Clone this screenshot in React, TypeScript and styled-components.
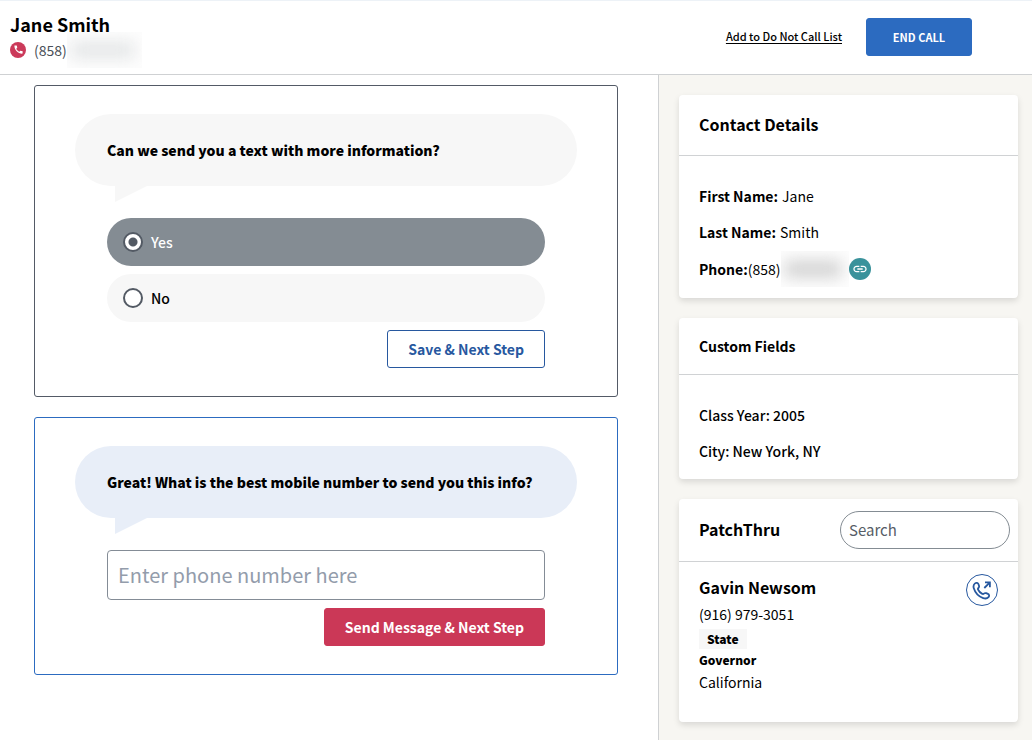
import React, { useState } from "react";
import styled, { createGlobalStyle } from "styled-components";
import { MdCall, MdLink } from "react-icons/md";

const GlobalStyle = createGlobalStyle`
  *, *::before, *::after { box-sizing: border-box; }
  body {
    margin: 0;
    background: #fff;
    color: #000;
    font-family: "Noto Sans CJK JP", "Noto Sans", sans-serif;
    font-size: 14px;
    line-height: 24px;
  }
  h1, h2, h3, p { margin: 0; font-size: inherit; }
  button, input { font: inherit; color: inherit; margin: 0; }
  button { cursor: pointer; }
`;

const Page = styled.div`
  display: flex;
  flex-direction: column;
  min-height: 100vh;
`;

const Header = styled.header`
  display: flex;
  align-items: center;
  justify-content: space-between;
  height: 75px;
  padding: 0 60px 2px 10px;
  border-top: 1px solid #edf2f7;
  border-bottom: 1px solid #cfd1d3;
`;

const Caller = styled.div`
  padding-bottom: 2px;
`;

const CallerName = styled.h1`
  font-size: 18px;
  font-weight: 700;
  line-height: 28px;
`;

const CallerPhone = styled.p`
  display: flex;
  align-items: center;
  color: #4a5058;
`;

const PhoneBadge = styled.span`
  display: grid;
  place-items: center;
  width: 16px;
  height: 16px;
  margin-right: 8px;
  border-radius: 50%;
  background: #cb3a5a;
  color: #fff;
`;

const Redacted = styled.span<{ $width: number; $tone: string }>`
  display: flex;
  align-items: center;
  width: ${(p) => p.$width}px;
  height: 36px;
  margin: -6px 0;
  overflow: hidden;
  background: #fdfdfd;

  &::before {
    content: "";
    width: 100%;
    height: 16px;
    margin: 0 8px 0 4px;
    background: ${(p) => p.$tone};
    filter: blur(8px);
  }
`;

const HeaderActions = styled.div`
  display: flex;
  align-items: center;
  gap: 24px;
`;

const TextLink = styled.a`
  padding-bottom: 2px;
  color: #000;
  font-size: 11px;
  font-weight: 500;
  text-decoration: underline;
  text-underline-offset: 2px;
`;

const Button = styled.button<{ $kind: "primary" | "outline" | "danger" }>`
  height: 38px;
  padding: 0 20px;
  border: 1px solid
    ${(p) => ({ primary: "#2c6bc0", outline: "#27589f", danger: "#cb3857" })[p.$kind]};
  border-radius: 3px;
  background: ${(p) => ({ primary: "#2c6bc0", outline: "#fff", danger: "#cb3857" })[p.$kind]};
  color: ${(p) => (p.$kind === "outline" ? "#27589f" : "#fff")};
  font-weight: 700;
  line-height: 20px;
`;

const EndCallButton = styled(Button)`
  min-width: 106px;
  font-size: 11px;
`;

const Body = styled.div`
  display: flex;
  flex: 1;
`;

const Script = styled.main`
  display: flex;
  flex: 1;
  flex-direction: column;
  gap: 20px;
  min-width: 0;
  padding: 10px 40px 20px 34px;
`;

const Step = styled.form<{ $active?: boolean }>`
  padding: 28px 40px;
  border: 1px solid ${(p) => (p.$active ? "#2c6bc0" : "#535a66")};
  border-radius: 3px;
`;

const Bubble = styled.h2<{ $color: string }>`
  position: relative;
  padding: 24px 32px;
  border-radius: 36px;
  background: ${(p) => p.$color};
  font-weight: 900;

  &::after {
    content: "";
    position: absolute;
    top: 100%;
    left: 40px;
    width: 32px;
    height: 16px;
    background: ${(p) => p.$color};
    clip-path: polygon(0 0, 100% 0, 0 100%);
  }
`;

const Answers = styled.div`
  display: flex;
  flex-direction: column;
  gap: 8px;
  padding: 32px 32px 0;
`;

const Option = styled.label<{ $selected: boolean }>`
  display: flex;
  align-items: center;
  gap: 8px;
  height: 48px;
  padding: 0 16px;
  border-radius: 24px;
  background: ${(p) => (p.$selected ? "#848c93" : "#f7f7f7")};
  color: ${(p) => (p.$selected ? "#fff" : "#000")};
  font-weight: 500;
`;

const Radio = styled.input`
  appearance: none;
  width: 20px;
  height: 20px;
  border: 2px solid #535a64;
  border-radius: 50%;
  background: #fff;

  &:checked {
    background: radial-gradient(circle, #535a64 4px, #fff 5px);
  }
`;

const Submit = styled(Button)`
  align-self: flex-end;
`;

const PhoneInput = styled.input`
  width: 100%;
  height: 50px;
  padding: 0 10px 2px;
  border: 1px solid #848c96;
  border-radius: 4px;
  background: #fff;
  font-size: 20px;

  &::placeholder { color: #939cab; opacity: 1; }
`;

const Sidebar = styled.aside`
  display: flex;
  flex: 0 0 374px;
  flex-direction: column;
  gap: 20px;
  padding: 20px 14px 18px 20px;
  border-left: 1px solid #cfd1d3;
  background: #f7f6f2;
`;

const Card = styled.section`
  border-radius: 4px;
  background: #fff;
  box-shadow: 0 3px 6px rgba(0, 0, 0, 0.12);
`;

const CardHeader = styled.div<{ $compact?: boolean }>`
  display: flex;
  align-items: center;
  justify-content: space-between;
  padding: ${(p) => (p.$compact ? "12px 8px 12px 20px" : "16px 20px")};
  border-bottom: 1px solid #d0d2d4;
`;

const CardTitle = styled.h2<{ $small?: boolean }>`
  padding-bottom: ${(p) => (p.$small ? 0 : 2)}px;
  font-size: ${(p) => (p.$small ? 14 : 16)}px;
  font-weight: 700;
  line-height: ${(p) => (p.$small ? 24 : 26)}px;
`;

const CardBody = styled.div`
  padding: 22px 20px 10px;
`;

const Field = styled.p`
  display: flex;
  align-items: center;
  gap: 4px;
  height: 36px;
`;

const PhoneField = styled(Field)`
  gap: 0;
  height: 38px;
`;

const CustomField = styled(Field)`
  font-weight: 500;
`;

const LinkButton = styled.button`
  display: grid;
  place-items: center;
  width: 22px;
  height: 22px;
  padding: 0;
  border: 0;
  border-radius: 50%;
  background: #3a929b;
  color: #fff;
`;

const SearchInput = styled.input`
  width: 170px;
  height: 38px;
  padding: 0 8px 2px;
  border: 1px solid #848c93;
  border-radius: 19px;
  background: #fff;
  font-size: 15px;

  &::placeholder { color: #565d66; opacity: 1; }
`;

const Official = styled.div`
  display: flex;
  align-items: flex-start;
  justify-content: space-between;
  padding: 12px 20px 28px;
`;

const OfficialInfo = styled.div`
  display: flex;
  flex-direction: column;
  align-items: flex-start;
`;

const OfficialName = styled.h3`
  padding-bottom: 2px;
  font-size: 16px;
  font-weight: 700;
  line-height: 26px;
`;

const Tag = styled.span`
  margin: 3px 0 1px;
  padding: 0 8px;
  background: #f7f7f7;
  font-size: 12px;
  font-weight: 900;
  line-height: 20px;
`;

const Office = styled.p`
  font-size: 12px;
  font-weight: 900;
  line-height: 20px;
`;

const CallButton = styled.button`
  display: grid;
  place-items: center;
  width: 32px;
  height: 32px;
  padding: 0;
  border: 1px solid #27589f;
  border-radius: 50%;
  background: #fff;
  color: #27589f;
`;

const OutgoingCallIcon = () => (
  <svg width="20" height="20" viewBox="0 0 20 20" fill="none" stroke="currentColor" strokeWidth="1.8" aria-hidden="true">
    <path
      d="M3 3.4C4.3 2.3 6 2.9 6.5 4.3L7 5.8C7.3 6.7 7 7.4 6.4 8C5.9 8.5 5.8 9 6.1 9.7C6.9 11.6 8.4 13 10.3 13.8C10.9 14.1 11.4 14 11.9 13.6C12.6 13 13.3 12.9 14.2 13.2L15.9 13.9C17.3 14.5 17.5 16.1 16.5 17.2C15.2 18.6 13.2 18.8 11.2 18.1C6.6 16.4 3.2 12.7 1.8 8.2C1.2 6.3 1.5 4.6 3 3.4Z"
      strokeLinejoin="round"
    />
    <path d="M12.3 8L17.4 2.9M13 2.4H17.9V7.3" />
  </svg>
);

export default function App() {
  const [answer, setAnswer] = useState("Yes");
  const stop = (e: React.FormEvent) => e.preventDefault();

  return (
    <Page>
      <GlobalStyle />
      <Header>
        <Caller>
          <CallerName>Jane Smith</CallerName>
          <CallerPhone>
            <PhoneBadge><MdCall size={11} /></PhoneBadge>
            (858)
            <Redacted $width={75} $tone="#e3e5e6" />
          </CallerPhone>
        </Caller>
        <HeaderActions>
          <TextLink href="#do-not-call">Add to Do Not Call List</TextLink>
          <EndCallButton type="button" $kind="primary">END CALL</EndCallButton>
        </HeaderActions>
      </Header>
      <Body>
        <Script>
          <Step onSubmit={stop}>
            <Bubble $color="#f7f7f7" id="text-question">Can we send you a text with more information?</Bubble>
            <Answers role="radiogroup" aria-labelledby="text-question">
              {["Yes", "No"].map((value) => (
                <Option key={value} $selected={answer === value}>
                  <Radio
                    type="radio"
                    name="answer"
                    value={value}
                    checked={answer === value}
                    onChange={() => setAnswer(value)}
                  />
                  {value}
                </Option>
              ))}
              <Submit type="submit" $kind="outline">Save &amp; Next Step</Submit>
            </Answers>
          </Step>
          <Step $active onSubmit={stop}>
            <Bubble $color="#e8eef8" id="phone-question">
              Great! What is the best mobile number to send you this info?
            </Bubble>
            <Answers>
              <PhoneInput type="tel" placeholder="Enter phone number here" aria-labelledby="phone-question" />
              <Submit type="submit" $kind="danger">Send Message &amp; Next Step</Submit>
            </Answers>
          </Step>
        </Script>
        <Sidebar>
          <Card>
            <CardHeader><CardTitle>Contact Details</CardTitle></CardHeader>
            <CardBody>
              <Field><b>First Name:</b> Jane</Field>
              <Field><b>Last Name:</b> Smith</Field>
              <PhoneField>
                <b>Phone:</b>(858)
                <Redacted $width={68} $tone="#cfcfcf" />
                <LinkButton type="button" aria-label="Copy phone link"><MdLink size={16} /></LinkButton>
              </PhoneField>
            </CardBody>
          </Card>
          <Card>
            <CardHeader><CardTitle $small>Custom Fields</CardTitle></CardHeader>
            <CardBody>
              <CustomField>Class Year: 2005</CustomField>
              <CustomField>City: New York, NY</CustomField>
            </CardBody>
          </Card>
          <Card>
            <CardHeader $compact>
              <CardTitle>PatchThru</CardTitle>
              <SearchInput type="search" placeholder="Search" aria-label="Search PatchThru" />
            </CardHeader>
            <Official>
              <OfficialInfo>
                <OfficialName>Gavin Newsom</OfficialName>
                <p>(916) 979-3051</p>
                <Tag>State</Tag>
                <Office>Governor</Office>
                <p>California</p>
              </OfficialInfo>
              <CallButton type="button" aria-label="Call Gavin Newsom"><OutgoingCallIcon /></CallButton>
            </Official>
          </Card>
        </Sidebar>
      </Body>
    </Page>
  );
}
